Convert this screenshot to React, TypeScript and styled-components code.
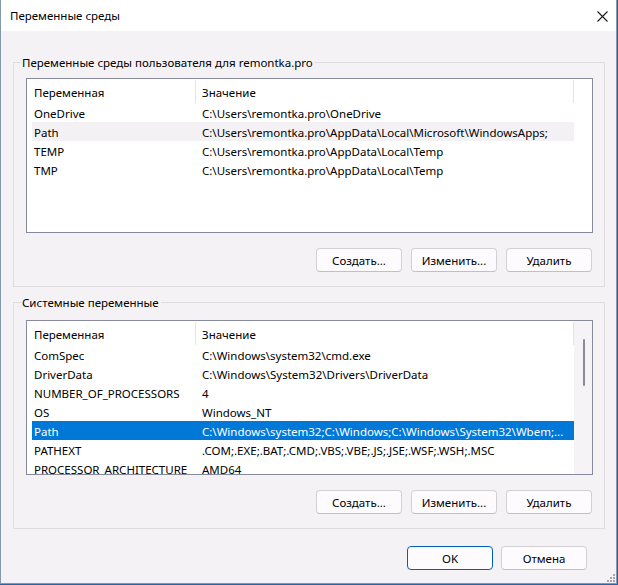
import styled, { createGlobalStyle } from 'styled-components';

type Row = { name: string; value: string };

const userVars: Row[] = [
  { name: 'OneDrive', value: 'C:\\Users\\remontka.pro\\OneDrive' },
  { name: 'Path', value: 'C:\\Users\\remontka.pro\\AppData\\Local\\Microsoft\\WindowsApps;' },
  { name: 'TEMP', value: 'C:\\Users\\remontka.pro\\AppData\\Local\\Temp' },
  { name: 'TMP', value: 'C:\\Users\\remontka.pro\\AppData\\Local\\Temp' },
];

const systemVars: Row[] = [
  { name: 'ComSpec', value: 'C:\\Windows\\system32\\cmd.exe' },
  { name: 'DriverData', value: 'C:\\Windows\\System32\\Drivers\\DriverData' },
  { name: 'NUMBER_OF_PROCESSORS', value: '4' },
  { name: 'OS', value: 'Windows_NT' },
  { name: 'Path', value: 'C:\\Windows\\system32;C:\\Windows;C:\\Windows\\System32\\Wbem;...' },
  { name: 'PATHEXT', value: '.COM;.EXE;.BAT;.CMD;.VBS;.VBE;.JS;.JSE;.WSF;.WSH;.MSC' },
  { name: 'PROCESSOR_ARCHITECTURE', value: 'AMD64' },
];

type ListProps = {
  rows: Row[];
  hovered?: number;
  selected?: number;
  scroll?: boolean;
};

const VarList = ({ rows, hovered, selected, scroll }: ListProps) => {
  return (
    <ListBox>
      <ListBody>
        <HeaderRow>
          <HeaderCell>Переменная</HeaderCell>
          <HeaderCell $value>Значение</HeaderCell>
        </HeaderRow>
        {rows.map((r, i) => (
          <DataRow key={r.name} $hover={i === hovered} $selected={i === selected}>
            <NameCell>{r.name}</NameCell>
            <ValueCell>{r.value}</ValueCell>
          </DataRow>
        ))}
      </ListBody>
      <ScrollGutter $active={scroll}>{scroll && <ScrollThumb />}</ScrollGutter>
    </ListBox>
  );
};

const ButtonBar = () => (
  <GroupButtons>
    <Button>Создать...</Button>
    <Button>Изменить...</Button>
    <Button>Удалить</Button>
  </GroupButtons>
);

// точки уголка изменения размера
const gripDots = [
  [8, 2],
  [5, 5],
  [8, 5],
  [2, 8],
  [5, 8],
  [8, 8],
];

const App = () => {
  return (
    <>
      <GlobalStyle />
      <Window>
        <TitleBar>
          <Title>Переменные среды</Title>
          <CloseButton>
            <svg width="11" height="11" viewBox="0 0 11 11">
              <path d="M0.5 0.5 L10.5 10.5 M10.5 0.5 L0.5 10.5" stroke="#1a1a1a" strokeWidth="1.1" />
            </svg>
          </CloseButton>
        </TitleBar>
        <Content>
          <Group $top={8}>
            <Legend>Переменные среды пользователя для remontka.pro</Legend>
            <VarList rows={userVars} hovered={1} />
            <ButtonBar />
          </Group>
          <Group $top={10} $space={7}>
            <Legend>Системные переменные</Legend>
            <VarList rows={systemVars} selected={4} scroll />
            <ButtonBar />
          </Group>
        </Content>
        <Footer>
          <Button $primary>OK</Button>
          <Button>Отмена</Button>
        </Footer>
        <Grip>
          <svg width="11" height="11" viewBox="0 0 11 11">
            {gripDots.map(([x, y]) => (
              <rect key={`${x}-${y}`} x={x} y={y} width="2" height="2" fill="#a8a6aa" />
            ))}
          </svg>
        </Grip>
      </Window>
    </>
  );
};

export default App;

const GlobalStyle = createGlobalStyle`
  body {
    margin: 0;
    background: #2d62a3;
    font-family: "Noto Sans", "DejaVu Sans", sans-serif;
    font-size: 11.5px;
    color: #000;
  }
`;

const Window = styled.div`
  position: relative;
  box-sizing: border-box;
  width: 617px;
  height: 584px;
  border: 1px solid #8797aa;
  border-top: none;
  background: #f5f2f5;
  display: flex;
  flex-direction: column;
`;

const TitleBar = styled.div`
  height: 31px;
  background: #ffffff;
  display: flex;
  align-items: center;
  justify-content: space-between;
  padding-left: 9px;
`;

const Title = styled.span`
  line-height: 16px;
  padding-top: 1px;
`;

const CloseButton = styled.div`
  width: 46px;
  height: 31px;
  display: flex;
  align-items: center;
  justify-content: center;
  margin-right: -9px;
  padding-top: 1px;
  box-sizing: border-box;
`;

const Content = styled.div`
  padding: 23px 11px 0 12px;
  display: flex;
  flex-direction: column;
`;

const Group = styled.fieldset<{ $top: number; $space?: number }>`
  margin: ${(p) => p.$space ?? 0}px 0 0 0;
  border: 1px solid #dfdcdf;
  padding: ${(p) => p.$top}px 11px 14px 12px;
  min-width: 0;
`;

const Legend = styled.legend`
  margin-left: -5px;
  padding: 1px 2px 0 1px;
  line-height: 15px;
`;

const ListBox = styled.div`
  height: 155px;
  box-sizing: border-box;
  border: 1px solid #868a9c;
  background: #ffffff;
  display: flex;
  overflow: hidden;
`;

const ListBody = styled.div`
  flex: 1;
  padding-left: 5px;
  display: flex;
  flex-direction: column;
  min-width: 0;
`;

const HeaderRow = styled.div`
  display: grid;
  grid-template-columns: 164px 1fr;
  height: 24px;
  flex-shrink: 0;
`;

const HeaderCell = styled.div<{ $value?: boolean }>`
  display: flex;
  align-items: center;
  padding: 2px 0 0 ${(p) => (p.$value ? 6 : 2)}px;
  border-right: 1px solid #e6e3e6;
  margin-top: 1px;
  white-space: nowrap;
`;

const DataRow = styled.div<{ $hover?: boolean; $selected?: boolean }>`
  display: grid;
  grid-template-columns: 164px 1fr;
  height: 19px;
  flex-shrink: 0;
  align-items: center;
  padding-top: 1px;
  box-sizing: border-box;
  background: ${(p) => (p.$selected ? '#0078d7' : p.$hover ? '#f4f1f4' : 'transparent')};
  color: ${(p) => (p.$selected ? '#ffffff' : '#000000')};
`;

const NameCell = styled.div`
  padding-left: 2px;
  white-space: nowrap;
  overflow: hidden;
`;

const ValueCell = styled.div`
  padding-left: 6px;
  white-space: nowrap;
  overflow: hidden;
`;

const ScrollGutter = styled.div<{ $active?: boolean }>`
  width: 18px;
  flex-shrink: 0;
  background: ${(p) => (p.$active ? '#f6f3f6' : '#ffffff')};
  display: flex;
  justify-content: center;
  padding-top: 18px;
`;

const ScrollThumb = styled.div`
  width: 2px;
  height: 47px;
  border-radius: 1px;
  background: #8b8b9b;
  margin-left: 1px;
`;

const GroupButtons = styled.div`
  display: flex;
  justify-content: flex-end;
  gap: 9px;
  margin-top: 15px;
  padding-right: 1px;
`;

const Button = styled.button<{ $primary?: boolean }>`
  width: 86px;
  height: 24px;
  box-sizing: border-box;
  font-family: inherit;
  font-size: 11.5px;
  color: #000;
  background: #fdfbfd;
  border: 1px solid ${(p) => (p.$primary ? '#005fb8' : '#d3d0d3')};
  border-bottom-color: ${(p) => (p.$primary ? '#005fb8' : '#c2bfc2')};
  border-radius: 4px;
  padding: 1px 0 0 0;
  :hover {
    cursor: pointer;
  }
`;

const Footer = styled.div`
  display: flex;
  justify-content: flex-end;
  gap: 8px;
  padding: 17px 29px 0 0;
`;

const Grip = styled.div`
  position: absolute;
  right: 0;
  bottom: 0;
  width: 11px;
  height: 11px;
  line-height: 0;
`;
